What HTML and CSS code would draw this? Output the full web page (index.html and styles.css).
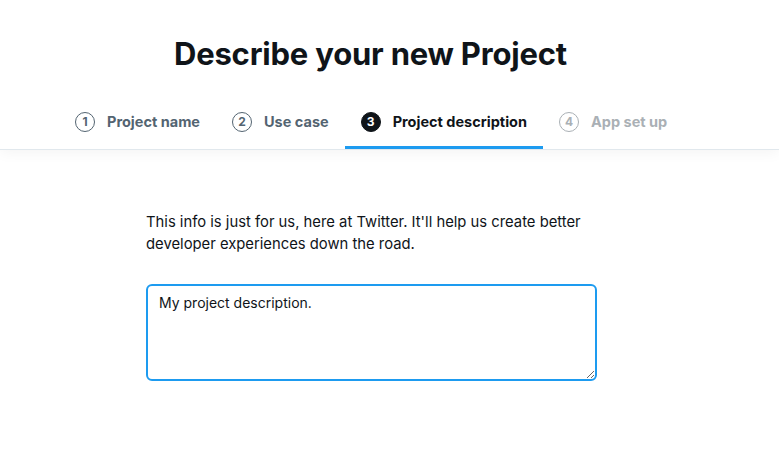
FILE: index.html
```html
<!DOCTYPE html>
<html lang="en">
<head>
<meta charset="utf-8">
<title>Describe your new Project</title>
<link rel="stylesheet" href="styles.css">
</head>
<body>
<header class="top">
  <h1 class="title">Describe your new Project</h1>
  <nav class="steps">
    <div class="step done"><span class="num">1</span><span class="label">Project name</span></div>
    <div class="step done"><span class="num">2</span><span class="label">Use case</span></div>
    <div class="step active"><span class="num">3</span><span class="label">Project description</span></div>
    <div class="step pending"><span class="num">4</span><span class="label">App set up</span></div>
  </nav>
</header>
<main class="content">
  <p class="intro">This info is just for us, here at Twitter. It'll help us create better developer experiences down the road.</p>
  <textarea class="desc">My project description.</textarea>
</main>
</body>
</html>
```

FILE: styles.css
```css
* { box-sizing: border-box; }
html, body { margin: 0; padding: 0; background: #fff; }
body {
  font-family: Inter, "Noto Sans", "Liberation Sans", sans-serif;
  color: #0f1419;
}
.top {
  border-bottom: 1px solid #e1e8ed;
  box-shadow: 0 2px 14px rgba(0, 0, 0, 0.05);
  position: relative;
}
.title {
  margin: 0;
  padding: 35px 0 0 174px;
  font-size: 31px;
  line-height: 37px;
  font-weight: 700;
  letter-spacing: -0.2px;
  color: #0f1419;
}
.steps {
  display: flex;
  padding: 29px 0 0 59px;
}
.step {
  display: flex;
  align-items: center;
  gap: 12px;
  padding: 0 16px 4px;
  border-bottom: 3px solid transparent;
  font-size: 14.5px;
  font-weight: 700;
  height: 48px;
}
.num {
  width: 20px;
  height: 20px;
  border-radius: 50%;
  border: 1.5px solid currentColor;
  display: flex;
  align-items: center;
  justify-content: center;
  font-size: 12px;
  font-weight: 700;
  line-height: 1;
}
.done { color: #536471; }
.active { color: #0f1419; border-bottom-color: #1d9bf0; }
.active .num { background: #0f1419; color: #fff; border-color: #0f1419; }
.pending { color: #aab0b5; }
.content {
  padding: 61px 0 0 146px;
}
.intro {
  margin: 0;
  width: 460px;
  font-size: 14.8px;
  line-height: 22px;
  color: #0f1419;
}
.desc {
  display: block;
  margin-top: 29px;
  width: 451px;
  height: 97px;
  border: 2px solid #1d9bf0;
  border-radius: 6px;
  padding: 6px 11px;
  font-family: Inter, "Noto Sans", "Liberation Sans", sans-serif;
  font-size: 14px;
  line-height: 22px;
  color: #0f1419;
  outline: none;
  resize: both;
}
```
